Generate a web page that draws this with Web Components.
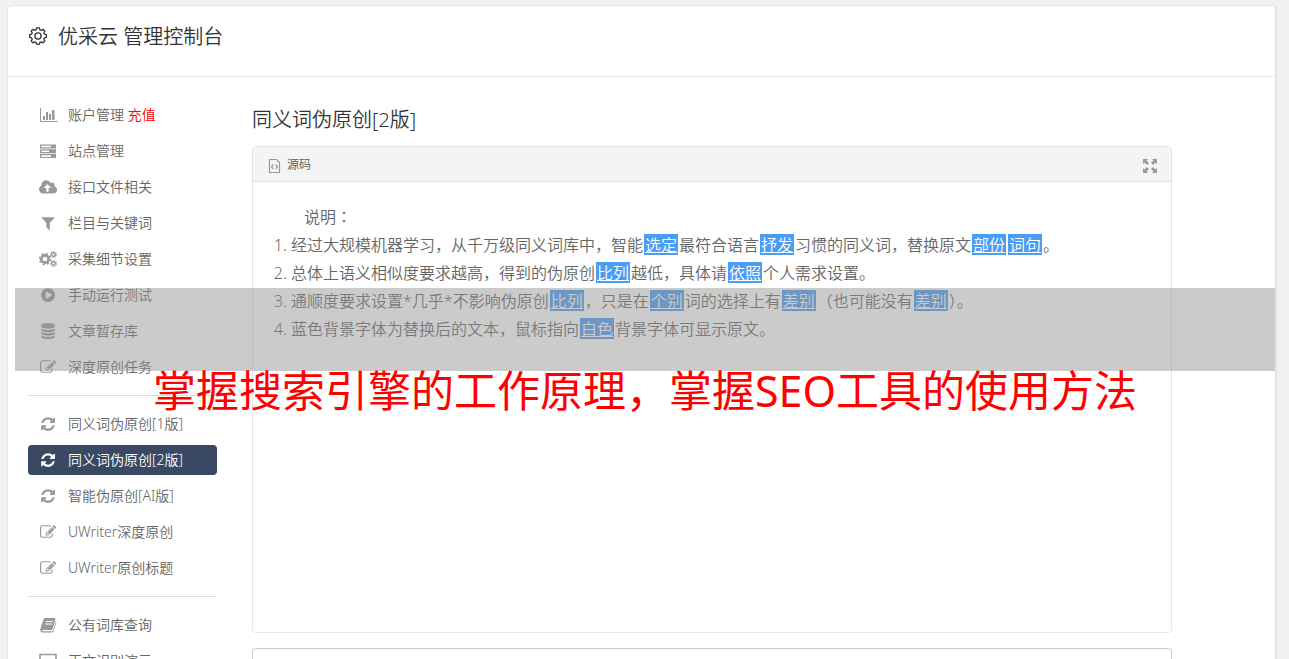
<!DOCTYPE html>
<html lang="zh-CN">
<head>
<meta charset="utf-8">
<title>优采云 管理控制台</title>
<style>
html, body { margin: 0; height: 100%; }
body { background: #f1f1f1; color: #666; font-family: "Noto Sans", "Noto Sans CJK SC", sans-serif; font-size: 14px; font-weight: 350; overflow: hidden; }
</style>
</head>
<body>
<console-app></console-app>
<script>
const ICONS = {
  chart: '<path d="M1.500 2V15.500H18.500" fill="none" stroke="currentColor" stroke-width="1"/><path d="M4 10h2v4H4zM7 6h2v8H7zM10 8h2v6h-2zM13 4h2.500v10H13z"/>',
  server: '<path fill-rule="evenodd" d="M1 2.500h16v4H1zM2.300 3.700v1.600h9.700V3.700zM1 7.300h16v4H1zM2.300 8.500v1.600h7.700V8.500zM1 12.100h16v4H1zM2.300 13.300v1.600h9.700v-1.600z"/>',
  cloud: '<path transform="translate(0 1) scale(.0094)" d="M1280 928q0-14-9-23l-352-352q-9-9-23-9t-23 9l-351 351q-10 12-10 24 0 14 9 23t23 9h224v352q0 13 9.500 22.500t22.500 9.500h192q13 0 22.500-9.500t9.500-22.500v-352h224q13 0 22.500-9.500t9.500-22.500zm640 224q0 159-112.500 271.500t-271.500 112.500h-1088q-185 0-316.500-131.500t-131.500-316.500q0-130 70-240t188-165q-2-30-2-43 0-212 150-362t362-150q156 0 285.500 87t188.500 231q71-62 166-62 106 0 181 75t75 181q0 76-41 138 130 31 213.500 135.500t83.500 238.500z"/>',
  filter: '<path transform="translate(1 1) scale(.009)" d="M1595 295q17 41-14 70l-493 493v742q0 42-39 59-13 5-25 5-27 0-45-19l-256-256q-19-19-19-45v-486l-493-493q-31-29-14-70 17-39 59-39h1280q42 0 59 39z"/>',
  cogs: '<g fill="none" stroke="currentColor"><circle cx="6" cy="9" r="3.600" stroke-width="2.600"/><circle cx="6" cy="9" r="5.400" stroke-width="1.600" stroke-dasharray="2.120 2.120"/><circle cx="14.500" cy="4.500" r="1.800" stroke-width="1.400"/><circle cx="14.500" cy="4.500" r="2.900" stroke-width="1.100" stroke-dasharray="1.300 1.300"/><circle cx="14.500" cy="13.500" r="1.800" stroke-width="1.400"/><circle cx="14.500" cy="13.500" r="2.900" stroke-width="1.100" stroke-dasharray="1.300 1.300"/></g>',
  play: '<path transform="translate(1 1) scale(.009)" d="M896 128q209 0 385.500 103t279.500 279.500 103 385.500-103 385.500-279.500 279.500-385.500 103-385.500-103-279.500-279.500-103-385.500 103-385.500 279.500-279.500 385.500-103zm384 823q32-18 32-55t-32-55l-544-320q-31-19-64-1-32 19-32 56v640q0 37 32 56 16 8 32 8 17 0 32-9z"/>',
  database: '<path transform="translate(1 1) scale(.009)" d="M896 768q237 0 443-43t325-127v170q0 69-103 128t-280 93.500-385 34.500-385-34.500-280-93.500-103-128v-170q119 84 325 127t443 43zm0 768q237 0 443-43t325-127v170q0 69-103 128t-280 93.500-385 34.500-385-34.500-280-93.500-103-128v-170q119 84 325 127t443 43zm0-384q237 0 443-43t325-127v170q0 69-103 128t-280 93.500-385 34.500-385-34.500-280-93.500-103-128v-170q119 84 325 127t443 43zm0-1152q208 0 385 34.500t280 93.500 103 128v128q0 69-103 128t-280 93.500-385 34.500-385-34.500-280-93.500-103-128v-128q0-69 103-128t280-93.500 385-34.500z"/>',
  edit: '<path transform="translate(1 1) scale(.009)" d="M888 1184l116-116-152-152-116 116v56h96v96h56zm440-720q-16-16-33 1l-350 350q-17 17-1 33t33-1l350-350q17-17 1-33zm80 594v190q0 119-84.500 203.500t-203.500 84.500h-832q-119 0-203.500-84.500t-84.500-203.500v-832q0-119 84.500-203.500t203.500-84.500h832q63 0 117 25 15 7 18 23 3 17-9 29l-49 49q-14 14-32 8-23-6-45-6h-832q-66 0-113 47t-47 113v832q0 66 47 113t113 47h832q66 0 113-47t47-113v-126q0-13 9-22l64-64q15-15 35-7t20 29zm-96-738l288 288-672 672h-288v-288zm444 132l-92 92-288-288 92-92q28-28 68-28t68 28l152 152q28 28 28 68t-28 68z"/>',
  refresh: '<path transform="translate(1 1) scale(.009)" d="M1639 1056q0 5-1 7-64 268-268 434.500t-478 166.500q-146 0-282.500-55t-243.500-157l-129 129q-19 19-45 19t-45-19-19-45v-448q0-26 19-45t45-19h448q26 0 45 19t19 45-19 45l-137 137q71 66 161 102t187 36q134 0 250-65t186-179q11-17 53-117 8-23 30-23h192q13 0 22.500 9.500t9.500 22.500zm25-800v448q0 26-19 45t-45 19h-448q-26 0-45-19t-19-45 19-45l138-138q-148-137-349-137-134 0-250 65t-186 179q-11 17-53 117-8 23-30 23h-199q-13 0-22.500-9.500t-9.500-22.500v-7q65-268 270-434.500t480-166.500q146 0 284 55.500t245 156.500l130-129q19-19 45-19t45 19 19 45z"/>',
  book: '<path fill-rule="evenodd" d="M6 2h9.500q1.300 0 .9 1.300L13.600 13q-.3 1-1.300 1H3.600q-.8 0-.5.700.2.500.9.500h9.300q.6 0 .8-.6L16.900 5q.7.500.4 1.400l-2.700 8.900q-.4 1.200-1.700 1.200H3.700Q1.700 16.500 1.300 14.500V13L4.500 3.200Q4.900 2 6 2zM7 5l-.3 1h6.800l.3-1zM6.300 7.500l-.3 1h6.800l.3-1z"/>',
  desktop: '<path d="M1 2.500h16v11H1zM6 16.500h7" fill="none" stroke="currentColor" stroke-width="1.600"/>',
  gear: '<g fill="none" stroke="currentColor" stroke-width="1.300" stroke-linejoin="round"><circle cx="9" cy="9" r="3.100"/><path d="M7.700.8h2.600l.6 2 1.300.5 1.900-1 1.700 1.700-1 1.900.6 1.300 2 .6v2.500l-2 .6-.6 1.300 1 1.900-1.700 1.700-1.900-1-1.300.6-.6 2H7.700l-.6-2-1.300-.6-1.900 1-1.700-1.700 1-1.900-.6-1.300-2-.6V7.800l2-.6.6-1.300-1-1.900 1.700-1.700 1.900 1 1.300-.5z"/></g>',
  code: '<path d="M3.500 2.500h7l3 3v10h-10zM7.300 7.500L5.500 9.700l1.800 2.300M9.700 7.500l1.800 2.200L9.700 12" fill="none" stroke="currentColor" stroke-width="1.200"/>',
  expand: '<path d="M2 2h5L5.500 3.500 8 6 6 8 3.500 5.500 2 7zM16 2v5l-1.500-1.500L12 8l-2-2 2.500-2.500L11 2zM2 16v-5l1.500 1.500L6 10l2 2-2.500 2.500L7 16zM16 16h-5l1.500-1.500L10 12l2-2 2.500 2.500L16 11z"/>'
};

function define(name, html) {
  const template = document.createElement('template');
  template.innerHTML = html;
  customElements.define(name, class extends HTMLElement {
    constructor() {
      super();
      this.attachShadow({ mode: 'open' }).append(template.content.cloneNode(true));
    }
  });
}

customElements.define('ui-icon', class extends HTMLElement {
  constructor() {
    super();
    this.attachShadow({ mode: 'open' });
  }
  connectedCallback() {
    this.shadowRoot.innerHTML = `<style>
      :host { display: block; flex: none; width: 18px; height: 18px; }
      svg { display: block; width: 100%; height: 100%; fill: currentColor; overflow: visible; }
    </style><svg viewBox="0 0 18 18" aria-hidden="true">${ICONS[this.getAttribute('name')]}</svg>`;
  }
});

customElements.define('nav-item', class extends HTMLElement {
  constructor() {
    super();
    this.attachShadow({ mode: 'open' });
  }
  connectedCallback() {
    this.shadowRoot.innerHTML = `<style>
      :host { display: block; }
      a { display: flex; align-items: center; gap: 11px; height: 30px; padding: 0 11px; border-radius: 4px; color: inherit; text-decoration: none; white-space: nowrap; }
      span { padding-bottom: 2px; }
      ui-icon { color: #999; }
      :host([active]) a { background: #394963; color: #fff; }
      :host([active]) ui-icon { color: #fff; }
    </style><a href="#"><ui-icon name="${this.getAttribute('icon')}"></ui-icon><span><slot></slot></span></a>`;
  }
});

define('nav-group', `<style>
  :host { display: flex; flex-direction: column; gap: 6px; }
  :host(:not(:first-child)) { border-top: 1px solid #ddd; margin-top: 13px; padding-top: 13px; }
</style><slot></slot>`);

define('swapped-word', `<style>
  :host { display: inline; }
  mark { background: #4a9cf4; color: #fff; text-decoration: underline; padding: 0 1px; margin: 0 1px; line-height: 22px; display: inline-block; height: 21px; }
</style><mark><slot></slot></mark>`);

define('editor-panel', `<style>
  :host { display: block; box-sizing: border-box; height: 487px; border: 1px solid #e5e5e5; border-radius: 4px; background: #fff; overflow: hidden; }
  header { display: flex; align-items: center; height: 34px; padding: 0 12px 0 13px; background: #f4f4f4; border-bottom: 1px solid #e5e5e5; font-size: 12px; gap: 3px; color: #555; }
  ui-icon { color: #999; margin-top: 3px; }
  button { margin-left: auto; padding: 0; border: 0; background: none; }
  .body { padding: 20px 19px; font-size: 16px; line-height: 28px; }
</style>
<header><ui-icon name="code"></ui-icon><span><slot name="title"></slot></span><button type="button" aria-label="全屏"><ui-icon name="expand"></ui-icon></button></header>
<div class="body"><slot></slot></div>`);

define('usage-notes', `<style>
  :host { display: block; }
  p { margin: 0; text-indent: 2em; }
  .colon { font-family: "Noto Sans CJK TC", sans-serif; }
  ol { margin: 0; padding-left: 19px; }
</style>
<p>说明<span class="colon" lang="zh-TW">：</span></p>
<ol>
<li>经过大规模机器学习，从千万级同义词库中，智能<swapped-word>选定</swapped-word>最符合语言<swapped-word>抒发</swapped-word>习惯的同义词，替换原文<swapped-word>部份</swapped-word><swapped-word>词句</swapped-word>。</li>
<li>总体上语义相似度要求越高，得到的伪原创<swapped-word>比列</swapped-word>越低，具体请<swapped-word>依照</swapped-word>个人需求设置。</li>
<li>通顺度要求设置*几乎*不影响伪原创<swapped-word>比列</swapped-word>，只是在<swapped-word>个别</swapped-word>词的选择上有<swapped-word>差别</swapped-word>（也可能没有<swapped-word>差别</swapped-word>）。</li>
<li>蓝色背景字体为替换后的文本，鼠标指向<swapped-word>白色</swapped-word>背景字体可显示原文。</li>
</ol>`);

define('promo-banner', `<style>
  :host { display: block; position: absolute; top: 288px; left: 15px; right: 14px; pointer-events: none; }
  .band { height: 83px; background: rgba(145, 145, 145, .475); }
  p { margin: 0; text-align: center; color: #f00; font-size: 43px; font-weight: 400; line-height: 40px; white-space: nowrap; }
</style>
<div class="band"></div><p>掌握搜索引擎的工作原理，掌握SEO工具的使用方法</p>`);

define('console-app', `<style>
  :host { display: block; box-sizing: border-box; height: 100vh; padding: 5px 12px 0 7px; overflow: hidden; }
  .card { min-height: 100vh; background: #fff; border: 1px solid #e5e5e5; border-right-width: 2px; border-radius: 5px; }
  .top { display: flex; align-items: center; gap: 11px; height: 62px; padding: 0 21px 8px; border-bottom: 1px solid #e5e5e5; color: #333; }
  .top ui-icon { margin-bottom: 2px; }
  h1, h2 { margin: 0; font-size: 20px; line-height: 28px; font-weight: inherit; color: #333; }
  .cols { display: grid; grid-template-columns: 189px 1fr; gap: 35px; padding: 23px 103px 0 20px; }
  main { padding-top: 6px; min-width: 0; }
  h2 { margin-bottom: 12px; }
  .red { color: #f00; }
  textarea { display: block; box-sizing: border-box; width: 100%; height: 200px; margin-top: 15px; border: 1px solid #ccc; border-radius: 4px; resize: none; }
</style>
<div class="card">
  <header class="top"><ui-icon name="gear"></ui-icon><h1>优采云 管理控制台</h1></header>
  <div class="cols">
    <nav>
      <nav-group>
        <nav-item icon="chart">账户管理 <span class="red">充值</span></nav-item>
        <nav-item icon="server">站点管理</nav-item>
        <nav-item icon="cloud">接口文件相关</nav-item>
        <nav-item icon="filter">栏目与关键词</nav-item>
        <nav-item icon="cogs">采集细节设置</nav-item>
        <nav-item icon="play">手动运行测试</nav-item>
        <nav-item icon="database">文章暂存库</nav-item>
        <nav-item icon="edit">深度原创任务</nav-item>
      </nav-group>
      <nav-group>
        <nav-item icon="refresh">同义词伪原创[1版]</nav-item>
        <nav-item icon="refresh" active>同义词伪原创[2版]</nav-item>
        <nav-item icon="refresh">智能伪原创[AI版]</nav-item>
        <nav-item icon="edit">UWriter深度原创</nav-item>
        <nav-item icon="edit">UWriter原创标题</nav-item>
      </nav-group>
      <nav-group>
        <nav-item icon="book">公有词库查询</nav-item>
        <nav-item icon="desktop">正文识别演示</nav-item>
      </nav-group>
    </nav>
    <main>
      <h2>同义词伪原创[2版]</h2>
      <editor-panel><span slot="title">源码</span><usage-notes></usage-notes></editor-panel>
      <textarea aria-label="结果"></textarea>
    </main>
  </div>
</div>
<promo-banner></promo-banner>`);
</script>
</body>
</html>
